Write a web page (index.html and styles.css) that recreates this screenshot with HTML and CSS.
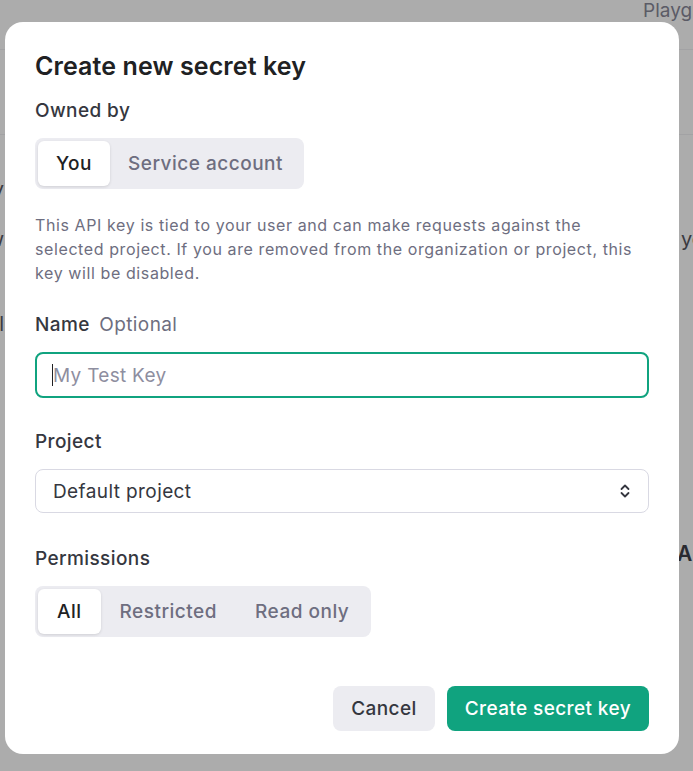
FILE: index.html
```html
<!DOCTYPE html>
<html lang="en">
<head>
  <meta charset="UTF-8">
  <meta name="viewport" content="width=device-width, initial-scale=1">
  <title>API keys</title>
  <link rel="stylesheet" href="styles.css">
</head>
<body>
  <div class="page">
    <header class="topbar">
      <span class="topbar-link">Playground</span>
    </header>
    <div class="subbar"></div>
    <div class="page-body">
      <p class="row r1"><span class="left">y</span></p>
      <p class="row r2"><span class="left">w</span><span class="right">you</span></p>
      <p class="row r3"><span class="left">tl</span></p>
      <p class="row r4"><span class="right strong">AI</span></p>
    </div>
  </div>

  <div class="overlay">
    <div class="modal">
      <h2 class="modal-title">Create new secret key</h2>

      <div class="field">
        <label class="label">Owned by</label>
        <div class="segmented">
          <button class="seg active">You</button>
          <button class="seg">Service account</button>
        </div>
      </div>

      <p class="hint">This API key is tied to your user and can make requests against the selected project. If you are removed from the organization or project, this key will be disabled.</p>

      <div class="field">
        <label class="label" for="keyName">Name <span class="optional">Optional</span></label>
        <div class="input-wrap">
          <span class="caret"></span>
          <input type="text" id="keyName" class="text-input" placeholder="My Test Key">
        </div>
      </div>

      <div class="field">
        <label class="label">Project</label>
        <div class="select">
          <span>Default project</span>
          <svg class="chevrons" width="12" height="18" viewBox="0 0 12 18" fill="none" stroke="#353740" stroke-width="1.8" stroke-linecap="round" stroke-linejoin="round">
            <path d="M2.5 7 L6 3.5 L9.5 7"/>
            <path d="M2.5 11 L6 14.5 L9.5 11"/>
          </svg>
        </div>
      </div>

      <div class="field">
        <label class="label">Permissions</label>
        <div class="segmented perms">
          <button class="seg active">All</button>
          <button class="seg">Restricted</button>
          <button class="seg">Read only</button>
        </div>
      </div>

      <div class="actions">
        <button class="btn btn-cancel">Cancel</button>
        <button class="btn btn-primary">Create secret key</button>
      </div>
    </div>
  </div>
</body>
</html>
```

FILE: styles.css
```css
  body {
    margin: 0;
    padding: 0;
    font-family: Inter, 'Noto Sans', Arial, sans-serif;
    background: #acacac;
    color: #202123;
    overflow: hidden;
    height: 771px;
  }

  .page {
    color: #55555f;
    font-size: 20px;
  }

  .topbar {
    height: 49px;
    border-bottom: 1px solid #a2a2a4;
    display: flex;
    justify-content: flex-end;
    align-items: flex-start;
  }

  .topbar-link {
    width: 50px;
    white-space: nowrap;
    font-size: 19px;
    color: #5b5b66;
    line-height: 22px;
  }

  .subbar {
    height: 84px;
    border-bottom: 1px solid #a2a2a4;
  }

  .page-body {
    color: #3a3a40;
  }

  .row {
    display: flex;
    margin: 0;
    height: 20px;
    line-height: 20px;
    white-space: nowrap;
  }

  .r1 { margin-top: 44px; }
  .r2 { margin-top: 30px; }
  .r3 { margin-top: 65px; }
  .r4 { margin-top: 210px; }

  .row .left {
    width: 40px;
    margin-left: -36px;
    text-align: right;
  }

  .row .right {
    width: 12px;
    margin-left: auto;
  }

  .row .strong {
    width: 16px;
    font-weight: 600;
    font-size: 21px;
    color: #2a2a30;
  }

  .overlay {
    position: fixed;
    inset: 0;
    display: flex;
    align-items: flex-start;
    justify-content: flex-start;
  }

  .modal {
    margin: 22px 0 0 5px;
    width: 674px;
    height: 732px;
    box-sizing: border-box;
    background: white;
    border-radius: 18px;
    padding: 29px 30px 23px 30px;
    display: flex;
    flex-direction: column;
  }

  .modal-title {
    margin: 0 0 18px 0;
    font-size: 25px;
    font-weight: 600;
    letter-spacing: 0.1px;
    line-height: 30px;
    color: #202123;
  }

  .field {
    display: flex;
    flex-direction: column;
  }

  .label {
    font-size: 19px;
    font-weight: 500;
    letter-spacing: 0.4px;
    color: #353740;
    line-height: 24px;
    margin-bottom: 15px;
  }

  .optional {
    font-weight: 400;
    color: #6e6e80;
    margin-left: 4px;
  }

  .segmented {
    display: flex;
    align-self: flex-start;
    background: #ececf1;
    border-radius: 8px;
    padding: 3px;
  }

  .seg {
    border: none;
    background: transparent;
    font-family: inherit;
    font-size: 19px;
    font-weight: 500;
    letter-spacing: 0.5px;
    color: #6e6e80;
    padding: 0 18px;
    height: 45px;
    border-radius: 6px;
    cursor: pointer;
  }

  .perms .seg {
    padding: 0 19px;
  }

  .seg.active {
    background: white;
    color: #202123;
    box-shadow: 0 1px 3px rgba(0, 0, 0, 0.12);
  }

  .hint {
    margin: 24px 0 28px 0;
    max-width: 605px;
    font-size: 16px;
    letter-spacing: 0.6px;
    line-height: 24px;
    color: #6e6e80;
  }

  .input-wrap {
    position: relative;
    margin-bottom: 32px;
  }

  .text-input {
    width: 100%;
    display: block;
    box-sizing: border-box;
    height: 46px;
    padding: 0 16px;
    border: 2px solid #10a37f;
    border-radius: 8px;
    outline: none;
    font-family: inherit;
    font-size: 19px;
    letter-spacing: 0.3px;
    color: #202123;
    background: white;
  }

  .text-input::placeholder {
    color: #8e8ea0;
  }

  .caret {
    position: absolute;
    left: 17px;
    top: 12px;
    width: 1px;
    height: 22px;
    background: #202123;
  }

  .select {
    height: 44px;
    box-sizing: border-box;
    border: 1px solid #d9d9e3;
    border-radius: 8px;
    display: flex;
    align-items: center;
    justify-content: space-between;
    padding: 0 17px;
    font-size: 19px;
    letter-spacing: 0.4px;
    color: #353740;
    margin-bottom: 34px;
  }

  .actions {
    margin-top: auto;
    display: flex;
    justify-content: flex-end;
    gap: 12px;
  }

  .btn {
    height: 45px;
    border: none;
    border-radius: 8px;
    font-family: inherit;
    font-size: 19px;
    font-weight: 500;
    letter-spacing: 0.4px;
    padding: 0 18px;
    cursor: pointer;
  }

  .btn-cancel {
    background: #ececf1;
    color: #353740;
  }

  .btn-primary {
    background: #10a37f;
    color: white;
  }
```
